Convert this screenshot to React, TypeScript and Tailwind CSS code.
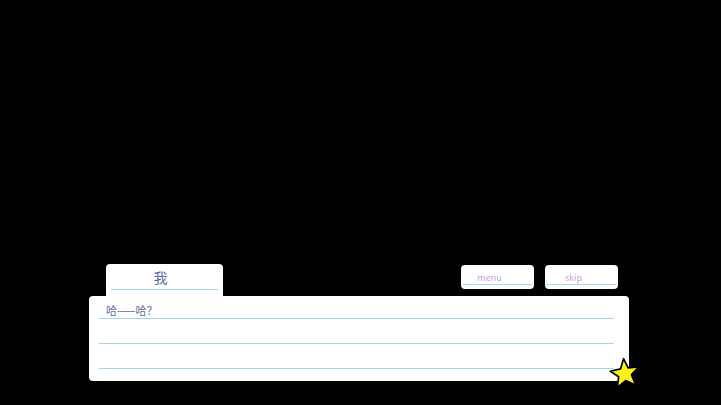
import React from 'react';

const Star: React.FC = () => (
    <svg width="34" height="34" viewBox="0 0 32 32" className="absolute -right-[13px] -bottom-[9px]">
        <path
            d="M16.5 2.5 L19.6 11.6 L29.5 12.2 L21.8 18.4 L24.3 28.6 L15.6 23.2 L7 28.4 L9.6 18.6 L2.5 12.4 L12.3 11.6 Z"
            fill="#fff21a"
            stroke="#000"
            strokeWidth="1.6"
            strokeLinejoin="round"
            transform="rotate(-8 16 16)"
        />
    </svg>
);

const SmallButton: React.FC<{ label: string }> = ({ label }) => (
    <button className="w-[73px] h-[24px] bg-white rounded-[4px] px-[2px] flex flex-col">
        <span className="flex-1 flex items-center justify-center pr-[16px] pt-[5px] text-[9px] leading-none text-[#c3a6dc]">
            {label}
        </span>
        <div className="h-px bg-[#a9d5e8] mb-[4px]" />
    </button>
);

const App: React.FC = () => {
    return (
        <div
            className="w-[721px] h-[405px] bg-black flex flex-col justify-end pb-[24px] pl-[89px]"
            style={{ fontFamily: '"Noto Sans CJK SC", "Noto Sans", sans-serif' }}
        >
            <div className="w-[540px] flex flex-col">
                {/* name tab + buttons */}
                <div className="flex items-start justify-between">
                    <div className="ml-[17px] w-[117px] h-[32px] bg-white rounded-t-[4px] px-[5px] pt-[5px] flex flex-col">
                        <div className="h-[20px] flex items-center justify-center pr-[8px] pb-[4px] text-[14px] leading-none text-[#5b6aa8]">
                            我
                        </div>
                        <div className="h-px bg-[#a9d5e8]" />
                    </div>
                    <div className="flex gap-[11px] mr-[11px] mt-px">
                        <SmallButton label="menu" />
                        <SmallButton label="skip" />
                    </div>
                </div>

                {/* dialogue box */}
                <div className="relative h-[85px] bg-white rounded-[4px] pl-[10px] pr-[15px] pt-[6px]">
                    <div className="h-[15px] flex items-end pb-[1px] pl-[7px] text-[11px] leading-none text-[#5b6aa8]">
                        哈——哈？
                    </div>
                    <div className="h-px bg-[#a9d5e8] mt-[1px]" />
                    <div className="h-px bg-[#a9d5e8] mt-[24px]" />
                    <div className="h-px bg-[#a9d5e8] mt-[24px]" />
                    <Star />
                </div>
            </div>
        </div>
    );
};

export default App;
